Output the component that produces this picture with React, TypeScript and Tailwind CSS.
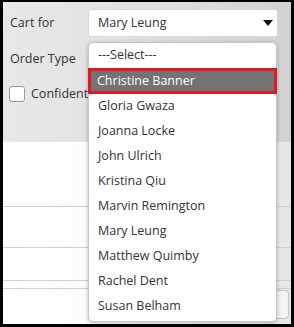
const people = [
  "Christine Banner",
  "Gloria Gwaza",
  "Joanna Locke",
  "John Ulrich",
  "Kristina Qiu",
  "Marvin Remington",
  "Mary Leung",
  "Matthew Quimby",
  "Rachel Dent",
  "Susan Belham",
];

export default function App() {
  return (
    <div
      className="relative w-[294px] h-[327px] overflow-hidden border-t-2 border-x-[3px] border-b-[3px] border-black bg-white text-[12.5px] text-[#333]"
      style={{ fontFamily: '"Open Sans", "Noto Sans", sans-serif' }}
    >
      {/* Filter panel */}
      <div className="h-[140px] bg-gradient-to-r from-[#e8e8e8] via-[#e0e0e0] to-[#d2d2d2] pt-[7px] pr-[13px]">
        <div className="flex items-center h-[28px]">
          <span className="w-[85px] pl-[7px]">Cart for</span>
          <div className="flex-1 h-[28px] bg-white rounded-[3px] border border-[#d8d8d8] flex items-center justify-between pl-[9px] pr-[4px]">
            <span>Mary Leung</span>
            <svg width="10" height="6" viewBox="0 0 10 6">
              <path d="M0 0 H10 L5 6 Z" fill="#111" />
            </svg>
          </div>
        </div>
        <div className="flex items-center h-[28px] mt-[8px]">
          <span className="w-[85px] pl-[7px]">Order Type</span>
          <div className="flex-1 h-[28px] bg-white rounded-[3px] border border-[#d8d8d8]" />
        </div>
        <div className="flex items-center gap-[6px] mt-[12px] pl-[6px]">
          <span className="w-[16px] h-[16px] rounded-[3px] border border-[#9a9a9a] bg-white" />
          <span>Confidential</span>
        </div>
      </div>

      {/* Lower rows */}
      <div className="bg-gradient-to-r from-white via-[#fafafa] to-[#e6e6e6]">
        <div className="h-[65px] border-b border-[#cfcfcf]" />
        <div className="h-[41px] border-b border-[#cfcfcf]" />
        <div className="h-[33px] border-b border-[#cfcfcf]" />
        <div className="h-[8px] border-b border-[#cfcfcf]" />
        <div className="h-[40px] flex justify-end pr-[2px] pt-[1px]">
          <div className="w-[30px] h-[29px] rounded-[4px] border border-[#c4c4c4] bg-[#f4f4f4]" />
        </div>
      </div>

      {/* Open dropdown list */}
      <div className="absolute left-[85px] top-[40px] w-[189px] bg-white rounded-[5px] border border-[#c8c8c8] shadow-[0_1px_4px_rgba(0,0,0,0.25)] pb-[2px]">
        <div className="h-[25px] flex items-center pl-[9px]">---Select---</div>
        {people.map((name, i) => (
          <div
            key={name}
            className={
              i === 0
                ? "h-[26px] flex items-center pl-[6px] bg-[#737373] text-white border-[3px] border-[#e3171f] -mx-px"
                : "h-[25px] flex items-center pl-[9px]"
            }
          >
            {name}
          </div>
        ))}
      </div>
    </div>
  );
}
